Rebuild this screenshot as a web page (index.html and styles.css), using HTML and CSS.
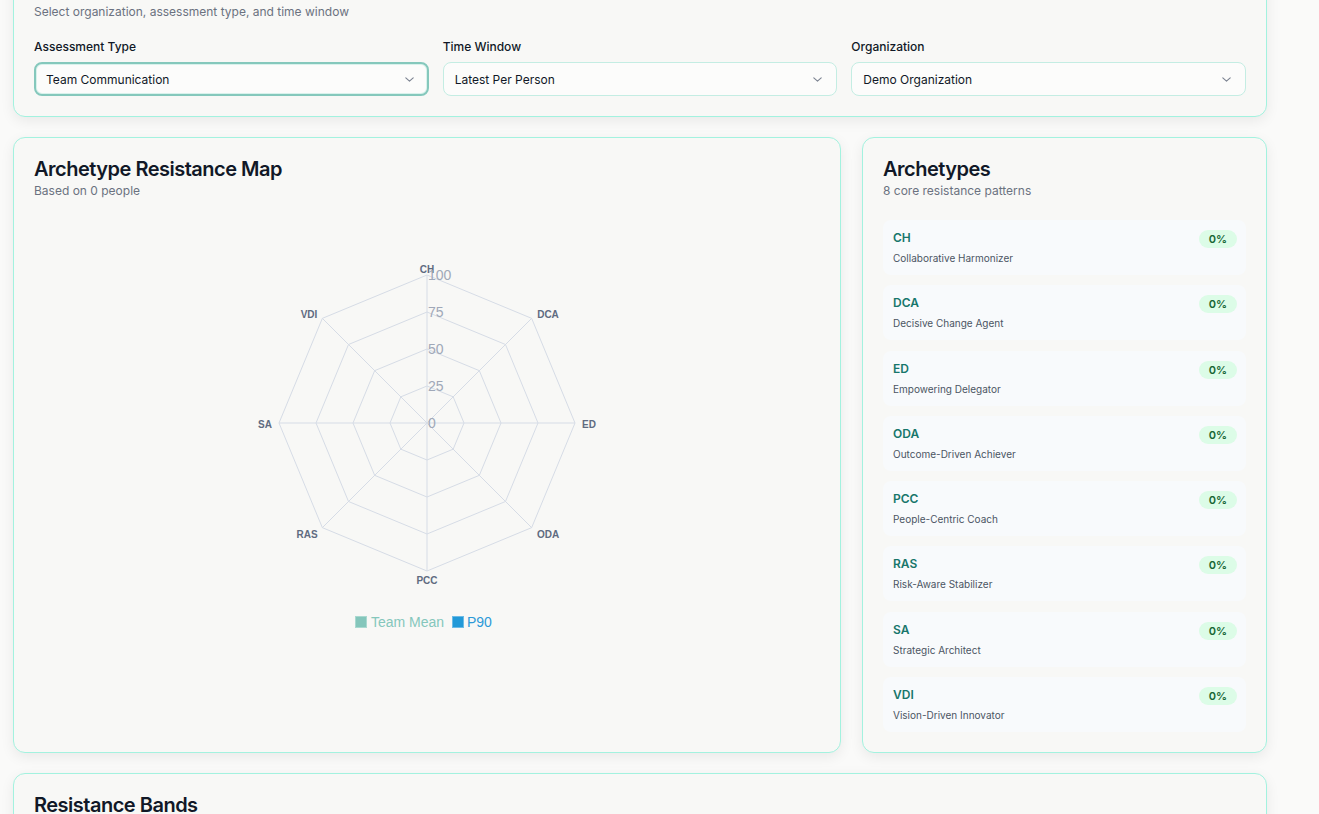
FILE: index.html
```html
<!DOCTYPE html>
<html lang="en">
<head>
<meta charset="utf-8">
<title>Archetype Resistance</title>
<link rel="stylesheet" href="styles.css">
</head>
<body>
<main class="page">
  <section class="card filters">
    <h2 class="card-title">Filters</h2>
    <p class="card-sub">Select organization, assessment type, and time window</p>
    <div class="filter-grid">
      <div class="field">
        <label class="field-label">Assessment Type</label>
        <div class="select focused"><span>Team Communication</span>
          <svg class="chev" width="9" height="5" viewBox="0 0 9 5"><path d="M0.8 0.8l3.7 3.4 3.7-3.4" fill="none" stroke="#7b8290" stroke-width="1.1" stroke-linecap="round" stroke-linejoin="round"/></svg>
        </div>
      </div>
      <div class="field">
        <label class="field-label">Time Window</label>
        <div class="select"><span>Latest Per Person</span>
          <svg class="chev" width="9" height="5" viewBox="0 0 9 5"><path d="M0.8 0.8l3.7 3.4 3.7-3.4" fill="none" stroke="#7b8290" stroke-width="1.1" stroke-linecap="round" stroke-linejoin="round"/></svg>
        </div>
      </div>
      <div class="field">
        <label class="field-label">Organization</label>
        <div class="select"><span>Demo Organization</span>
          <svg class="chev" width="9" height="5" viewBox="0 0 9 5"><path d="M0.8 0.8l3.7 3.4 3.7-3.4" fill="none" stroke="#7b8290" stroke-width="1.1" stroke-linecap="round" stroke-linejoin="round"/></svg>
        </div>
      </div>
    </div>
  </section>

  <div class="row">
    <section class="card">
      <h2 class="card-title">Archetype Resistance Map</h2>
      <p class="card-sub">Based on 0 people</p>
      <div class="chart">
        <svg width="786" height="533" viewBox="0 0 786 533">
          <g transform="translate(393 224)">
            <g fill="none" stroke="#d6dce6" stroke-width="1">
              <polygon points="0,-148 104.65,-104.65 148,0 104.65,104.65 0,148 -104.65,104.65 -148,0 -104.65,-104.65"/>
              <polygon points="0,-111 78.49,-78.49 111,0 78.49,78.49 0,111 -78.49,78.49 -111,0 -78.49,-78.49"/>
              <polygon points="0,-74 52.33,-52.33 74,0 52.33,52.33 0,74 -52.33,52.33 -74,0 -52.33,-52.33"/>
              <polygon points="0,-37 26.16,-26.16 37,0 26.16,26.16 0,37 -26.16,26.16 -37,0 -26.16,-26.16"/>
              <line x1="0" y1="0" x2="0" y2="-148"/>
              <line x1="0" y1="0" x2="104.65" y2="-104.65"/>
              <line x1="0" y1="0" x2="148" y2="0"/>
              <line x1="0" y1="0" x2="104.65" y2="104.65"/>
              <line x1="0" y1="0" x2="0" y2="148"/>
              <line x1="0" y1="0" x2="-104.65" y2="104.65"/>
              <line x1="0" y1="0" x2="-148" y2="0"/>
              <line x1="0" y1="0" x2="-104.65" y2="-104.65"/>
            </g>
            <g class="pt-label">
              <text x="0" y="-154">CH</text>
              <text x="121" y="-109">DCA</text>
              <text x="162" y="1">ED</text>
              <text x="121" y="111">ODA</text>
              <text x="0" y="157">PCC</text>
              <text x="-120" y="111">RAS</text>
              <text x="-162" y="1">SA</text>
              <text x="-118" y="-109">VDI</text>
            </g>
            <g class="tick">
              <text x="1" y="-148">100</text>
              <text x="1" y="-111">75</text>
              <text x="1" y="-74">50</text>
              <text x="1" y="-37">25</text>
              <text x="1" y="0">0</text>
            </g>
            <g class="legend">
              <rect x="-71.5" y="193.5" width="11" height="11" fill="#84c6bb" stroke="#a9d9d0"/>
              <text class="lg-mean" x="-56" y="199">Team Mean</text>
              <rect x="25.5" y="193.5" width="11" height="11" fill="#2299d8" stroke="#6cbbe6"/>
              <text class="lg-p90" x="40" y="199">P90</text>
            </g>
          </g>
        </svg>
      </div>
    </section>

    <section class="card">
      <h2 class="card-title">Archetypes</h2>
      <p class="card-sub">8 core resistance patterns</p>
      <ul class="arch-list">
        <li class="arch"><div class="arch-text"><span class="code">CH</span><span class="name">Collaborative Harmonizer</span></div><span class="badge">0%</span></li>
        <li class="arch"><div class="arch-text"><span class="code">DCA</span><span class="name">Decisive Change Agent</span></div><span class="badge">0%</span></li>
        <li class="arch"><div class="arch-text"><span class="code">ED</span><span class="name">Empowering Delegator</span></div><span class="badge">0%</span></li>
        <li class="arch"><div class="arch-text"><span class="code">ODA</span><span class="name">Outcome-Driven Achiever</span></div><span class="badge">0%</span></li>
        <li class="arch"><div class="arch-text"><span class="code">PCC</span><span class="name">People-Centric Coach</span></div><span class="badge">0%</span></li>
        <li class="arch"><div class="arch-text"><span class="code">RAS</span><span class="name">Risk-Aware Stabilizer</span></div><span class="badge">0%</span></li>
        <li class="arch"><div class="arch-text"><span class="code">SA</span><span class="name">Strategic Architect</span></div><span class="badge">0%</span></li>
        <li class="arch"><div class="arch-text"><span class="code">VDI</span><span class="name">Vision-Driven Innovator</span></div><span class="badge">0%</span></li>
      </ul>
    </section>
  </div>

  <section class="card bands">
    <h2 class="card-title">Resistance Bands</h2>
    <p class="card-sub">Distribution across resistance levels</p>
  </section>
</main>
</body>
</html>
```

FILE: styles.css
```css
* { box-sizing: border-box; }

html, body {
  margin: 0;
  padding: 0;
  background: #fafaf9;
  font-family: Inter, "Noto Sans", sans-serif;
  color: #111827;
  overflow: hidden;
}

.page {
  width: 1254px;
  margin: -42px 0 0 13px;
  display: flex;
  flex-direction: column;
  gap: 20px;
}

.card {
  background: #f8f8f6;
  border: 1px solid #a3f2df;
  border-radius: 12px;
  padding: 17px 20px 20px;
  box-shadow: 0 4px 14px rgba(0, 0, 0, 0.07);
}

.card-title {
  margin: 0;
  font-size: 20px;
  line-height: 28px;
  font-weight: 600;
  color: #111827;
  letter-spacing: -0.5px;
}

.card-sub {
  margin: 0;
  font-size: 12px;
  line-height: 16px;
  color: #6b7280;
}

.filters { padding-bottom: 20px; }

.filter-grid {
  margin-top: 17px;
  display: grid;
  grid-template-columns: repeat(3, 1fr);
  gap: 14px;
}

.field {
  display: flex;
  flex-direction: column;
  gap: 5px;
}

.field-label {
  font-size: 12px;
  line-height: 20px;
  font-weight: 500;
  color: #111827;
}

.select {
  height: 34px;
  border: 1px solid #c4ede3;
  border-radius: 8px;
  background: #fcfcfb;
  display: flex;
  align-items: center;
  justify-content: space-between;
  padding: 0 14px 0 11px;
  font-size: 12px;
  color: #111827;
}

.select.focused {
  border: 2px solid #85c8bc;
  box-shadow: inset 0 0 0 1px #d9f2ec;
  padding-left: 10px;
  padding-right: 13px;
}

.chev { display: block; }

.row {
  display: grid;
  grid-template-columns: 828px 405px;
  gap: 21px;
}

.chart {
  height: 533px;
}

.chart svg { display: block; }

.pt-label text {
  font-family: "Liberation Sans", Arial, sans-serif;
  font-size: 10px;
  font-weight: 700;
  fill: #5f6b80;
  text-anchor: middle;
  dominant-baseline: central;
}

.tick text {
  font-family: "Liberation Sans", Arial, sans-serif;
  font-size: 14px;
  fill: #a0a8b8;
  dominant-baseline: central;
}

.legend text {
  font-family: "Liberation Sans", Arial, sans-serif;
  font-size: 14px;
  dominant-baseline: central;
}

.lg-mean { fill: #85c7bc; }
.lg-p90 { fill: #2d9ad8; }

.arch-list {
  list-style: none;
  margin: 21px 0 0;
  padding: 0;
  display: flex;
  flex-direction: column;
  gap: 10.3px;
}

.arch {
  height: 55px;
  background: #f8fafc;
  border-radius: 8px;
  padding: 10px 9px 10px 10px;
  display: flex;
  justify-content: space-between;
  align-items: flex-start;
}

.arch-text {
  display: flex;
  flex-direction: column;
  gap: 5px;
}

.code {
  font-size: 12px;
  line-height: 16px;
  font-weight: 600;
  color: #17766b;
}

.name {
  font-size: 10px;
  line-height: 14px;
  color: #4b5563;
}

.badge {
  height: 18px;
  padding: 0 10px;
  border-radius: 9px;
  background: #dcfce7;
  color: #166534;
  font-size: 11px;
  font-weight: 600;
  line-height: 18px;
}

.bands {
  min-height: 240px;
}
```
